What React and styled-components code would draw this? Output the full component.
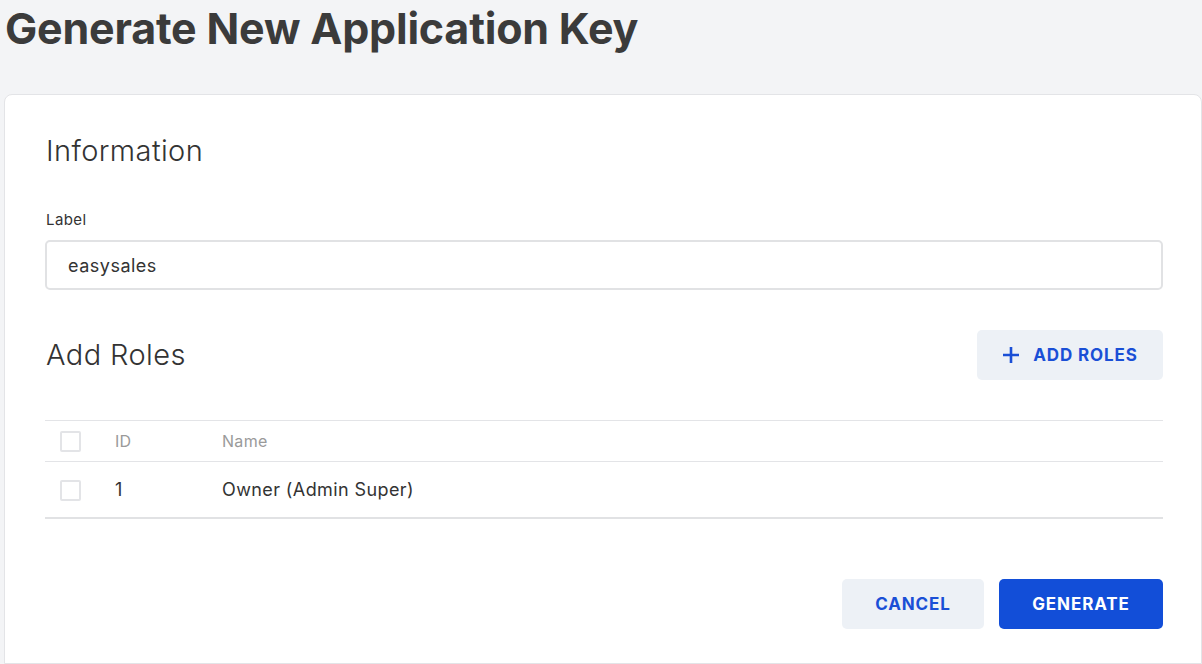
import React from "react";
import styled, { createGlobalStyle } from "styled-components";

const GlobalStyle = createGlobalStyle`
  html, body {
    margin: 0;
    padding: 0;
    background: #f3f4f6;
    font-family: Inter, "Noto Sans", sans-serif;
    color: #333;
  }
`;

const Page = styled.div`
  width: 1202px;
  height: 664px;
  overflow: hidden;
  display: flex;
  flex-direction: column;
`;

const Title = styled.h1`
  margin: 0;
  padding: 3px 0 0 5px;
  height: 94px;
  box-sizing: border-box;
  font-size: 43px;
  font-weight: 700;
  letter-spacing: -0.2px;
  color: #3b3b3b;
  line-height: 50px;
`;

const Card = styled.div`
  margin-left: 4px;
  flex: 1;
  background: #fff;
  border: 1px solid #e3e4e7;
  border-radius: 8px 8px 0 0;
  padding: 34px 38px 0 40px;
  display: flex;
  flex-direction: column;
`;

const SectionTitle = styled.h2`
  margin: 0;
  padding-left: 1px;
  font-size: 29px;
  font-weight: 300;
  letter-spacing: 0.4px;
  color: #333;
  line-height: 44px;
`;

const FieldLabel = styled.label`
  display: block;
  margin-top: 37px;
  padding-left: 1px;
  font-size: 15px;
  letter-spacing: 0.4px;
  color: #333;
  line-height: 20px;
`;

const Input = styled.input`
  display: block;
  margin-top: 10px;
  box-sizing: border-box;
  width: 100%;
  height: 50px;
  border: 2px solid #e1e2e4;
  border-radius: 5px;
  padding: 0 21px;
  font-family: inherit;
  font-size: 18px;
  letter-spacing: 0.5px;
  color: #333;
  outline: none;
`;

const RolesHeader = styled.div`
  display: flex;
  align-items: center;
  justify-content: space-between;
  margin-top: 40px;
`;

const Button = styled.button`
  height: 50px;
  border: none;
  border-radius: 5px;
  font-family: inherit;
  font-size: 17px;
  font-weight: 700;
  letter-spacing: 0.9px;
  display: inline-flex;
  align-items: center;
  justify-content: center;
  gap: 13px;
  cursor: pointer;
  background: ${(p) => (p.$primary ? "#124ed8" : "#edf1f6")};
  color: ${(p) => (p.$primary ? "#fff" : "#1a4fd6")};
  width: ${(p) => p.$width}px;
`;

const Table = styled.table`
  margin-top: 40px;
  width: 100%;
  border-collapse: collapse;
  border-top: 1px solid #e3e4e7;
  border-bottom: 2px solid #e1e2e4;
`;

const HeadCell = styled.th`
  text-align: left;
  font-weight: 400;
  font-size: 16px;
  letter-spacing: 0.3px;
  color: #9a9a9a;
  height: 40px;
  padding: 0;
  border-bottom: 1px solid #e3e4e7;
  width: ${(p) => (p.$width ? `${p.$width}px` : "auto")};
`;

const Cell = styled.td`
  font-size: 18px;
  letter-spacing: 0.4px;
  color: #333;
  height: 55px;
  padding: 0;
`;

const Box = styled.span`
  display: inline-block;
  width: 17px;
  height: 17px;
  border: 2px solid #e3e4e7;
  border-radius: 2px;
  margin-left: 15px;
  vertical-align: middle;
`;

const Footer = styled.div`
  display: flex;
  justify-content: flex-end;
  gap: 15px;
  margin-top: 60px;
`;

const PlusIcon = () => (
  <svg width="18" height="18" viewBox="0 0 18 18">
    <path d="M9 1v16M1 9h16" stroke="#1a4fd6" strokeWidth="2.6" />
  </svg>
);

export default function App() {
  return (
    <Page>
      <GlobalStyle />
      <Title>Generate New Application Key</Title>
      <Card>
        <SectionTitle>Information</SectionTitle>
        <FieldLabel>Label</FieldLabel>
        <Input defaultValue="easysales" />
        <RolesHeader>
          <SectionTitle>Add Roles</SectionTitle>
          <Button $width={186}>
            <PlusIcon />
            ADD ROLES
          </Button>
        </RolesHeader>
        <Table>
          <thead>
            <tr>
              <HeadCell $width={70}>
                <Box />
              </HeadCell>
              <HeadCell $width={107}>ID</HeadCell>
              <HeadCell>Name</HeadCell>
            </tr>
          </thead>
          <tbody>
            <tr>
              <Cell>
                <Box />
              </Cell>
              <Cell>1</Cell>
              <Cell>Owner (Admin Super)</Cell>
            </tr>
          </tbody>
        </Table>
        <Footer>
          <Button $width={142}>CANCEL</Button>
          <Button $primary $width={164}>
            GENERATE
          </Button>
        </Footer>
      </Card>
    </Page>
  );
}
